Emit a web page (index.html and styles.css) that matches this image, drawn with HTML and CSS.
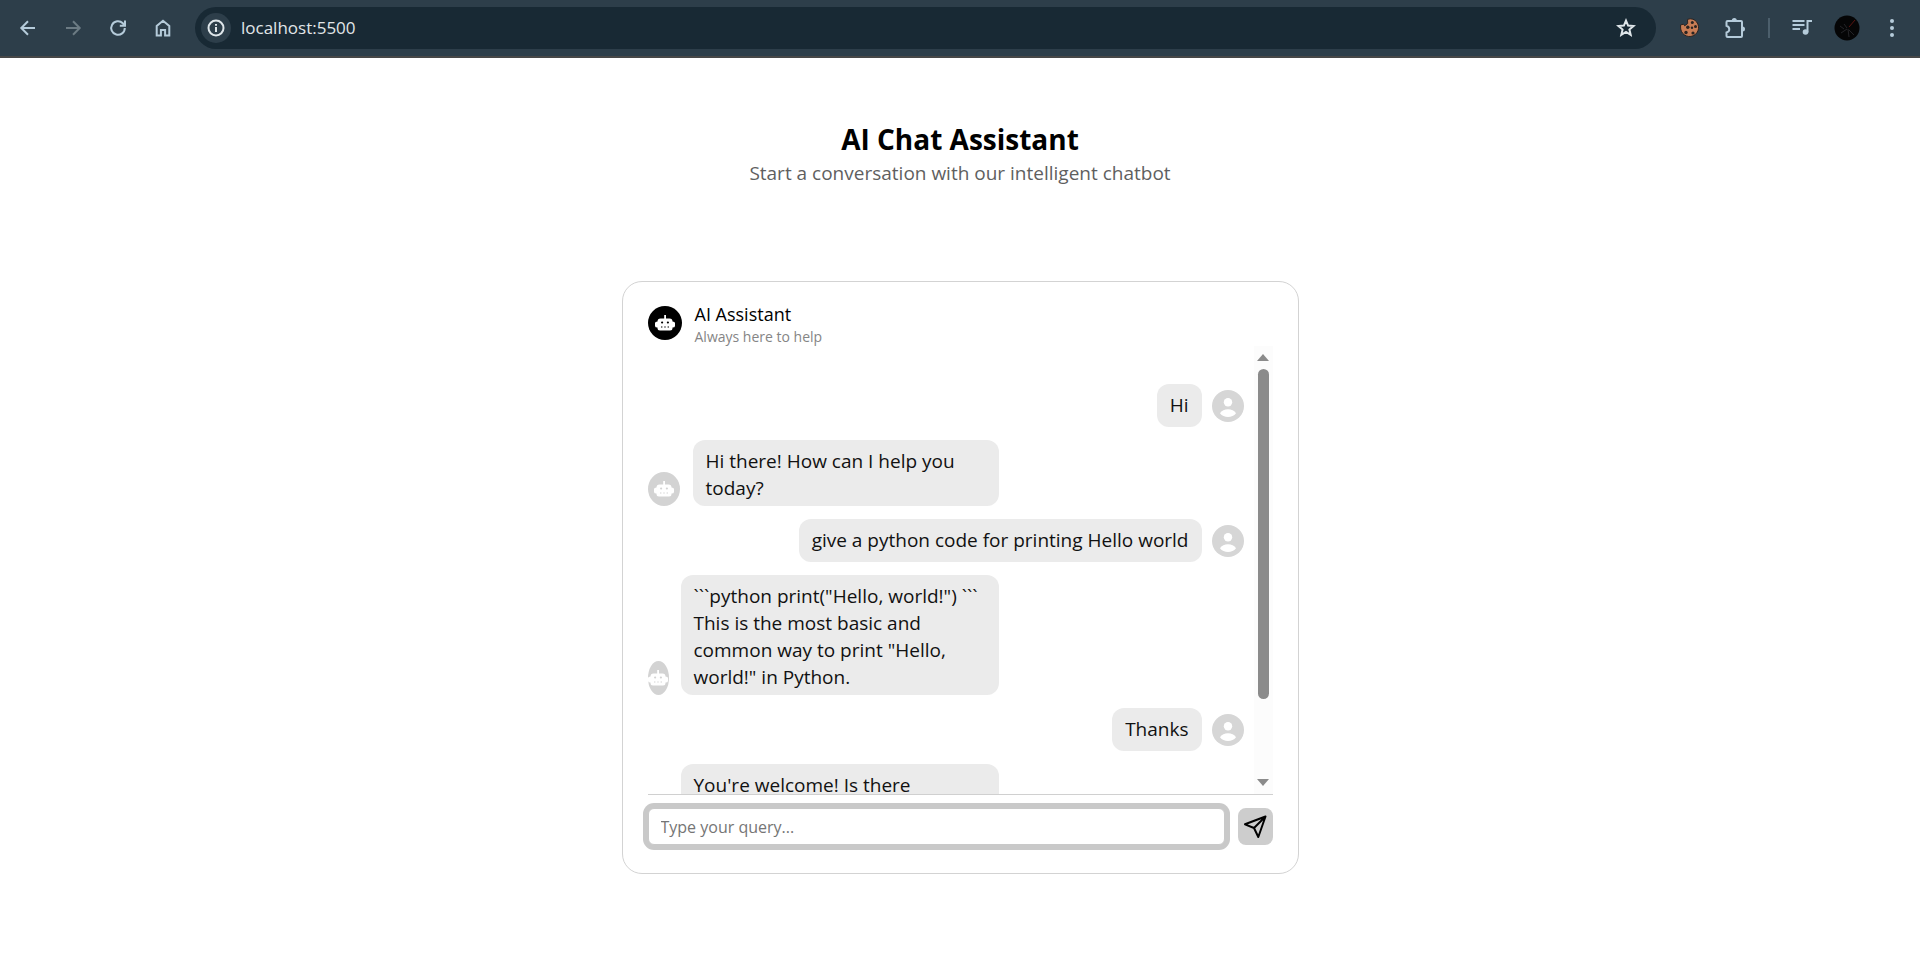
FILE: index.html
```html
<!DOCTYPE html>
<html lang="en">
<head>
<meta charset="utf-8">
<meta name="viewport" content="width=device-width, initial-scale=1">
<title>AI Chat Assistant</title>
<link rel="stylesheet" href="styles.css">
</head>
<body>
<svg class="sprite" aria-hidden="true">
  <symbol id="robot" viewBox="0 0 20 16">
    <path fill="currentColor" d="M9.200 0h1.800v3.500h3.500a3 3 0 0 1 3 3v6.500a2.500 2.500 0 0 1-2.500 2.500H5a2.500 2.500 0 0 1-2.500-2.500V6.500a3 3 0 0 1 3-3h3.700zM0 8Q0 6.500 2.500 6.500v6Q0 12.500 0 11zM20 8Q20 6.500 17.500 6.500v6Q20 12.500 20 11z"/>
    <path class="robot-face" d="M6 7.500a1.100 1.100 0 1 0 2.200 0a1.100 1.100 0 1 0-2.200 0M11.800 7.500a1.100 1.100 0 1 0 2.200 0a1.100 1.100 0 1 0-2.200 0M6 11.500h1.400v.9H6zM9.300 11.500h1.400v.9H9.300zM12.600 11.500H14v.9h-1.400z"/>
  </symbol>
  <symbol id="person" viewBox="0 0 32 32">
    <circle cx="16" cy="16" r="16" fill="#d6d6d6"/>
    <circle cx="16" cy="12.200" r="4.200" fill="#fff"/>
    <path fill="#fff" d="M8 23.200c3-5.200 13-5.200 16 0c-3.500 5-12.500 5-16 0z"/>
  </symbol>
</svg>

<header class="toolbar">
  <nav class="nav-buttons" aria-label="Browser">
    <button class="tool" aria-label="Back"><svg viewBox="0 0 20 20"><path d="M17 10H4M10 3.300L3.300 10l6.700 6.700"/></svg></button>
    <button class="tool tool-off" aria-label="Forward"><svg viewBox="0 0 20 20"><path d="M3 10h13M10 3.300l6.700 6.700-6.700 6.700"/></svg></button>
    <button class="tool" aria-label="Reload"><svg viewBox="0 0 20 20"><path d="M16.800 10a6.800 6.800 0 1 1-2-4.800L17 7.500M17 2.500v5.200h-5.200"/></svg></button>
    <button class="tool" aria-label="Home"><svg viewBox="0 0 20 20"><path d="M3.700 17.500V8L10 2.700 16.300 8v9.500h-4.200v-5.600H7.900v5.600z"/></svg></button>
  </nav>
  <div class="omnibox">
    <button class="site-info" aria-label="Site information"><svg viewBox="0 0 20 20"><circle cx="10" cy="10" r="7.500"/><path d="M10 9v5M10 6v1.700"/></svg></button>
    <input class="address" aria-label="Address" value="localhost:5500">
    <button class="tool star" aria-label="Bookmark"><svg viewBox="0 0 20 20"><path d="M10 2.600l2.100 5 5.400.4-4.100 3.500 1.300 5.300L10 14l-4.700 2.800 1.300-5.300L2.500 8l5.400-.4z"/></svg></button>
  </div>
  <div class="actions">
    <button class="tool cookie" aria-label="Cookie editor"><svg viewBox="0 0 20 20"><path d="M7.500 1.400Q10 .2 13 1.200a9 9 0 1 1-12.300 9.800L.5 7l3-.8 1.200 1.600 3-2.300z" fill="#c97d55" stroke="#2b2422" stroke-width="1"/><g fill="#2b2422" stroke="none"><circle cx="12.300" cy="4.500" r="1.500"/><circle cx="7.800" cy="9.300" r="1.700"/><circle cx="15.500" cy="8.500" r="1.500"/><circle cx="6" cy="14.500" r="1.700"/><circle cx="13" cy="15" r="1.600"/><circle cx="12" cy="9.800" r="1.200"/></g></svg></button>
    <button class="tool" aria-label="Extensions"><svg class="puzzle" viewBox="0 0 22 22"><path d="M3.500 4h13.500q1 0 1 1v14q0 1-1 1H3.500q-1 0-1-1v-3.500q2.800-.8 2.800-3.300T2.500 8.700V5q0-1 1-1z"/><path d="M7.800 3.500a2.500 2.500 0 0 1 5 0zM18.500 9.500a2.500 2.500 0 0 1 0 5z" fill="currentColor" stroke="none"/></svg></button>
    <span class="divider"></span>
    <button class="tool" aria-label="Media controls"><svg viewBox="0 0 20 20"><path d="M.5 3h12M.5 7h12M.5 11h7.500M15.500 14.500V3H20"/><circle cx="13.500" cy="14" r="2.800" fill="currentColor" stroke="none"/></svg></button>
    <button class="tool" aria-label="Profile"><svg class="profile" viewBox="0 0 26 26"><circle cx="13" cy="13" r="12.500" fill="#050506" stroke="none"/><path d="M15 12l6-7" stroke="#5a1512" stroke-width="1"/><path d="M13 14l-6 4M14 14l1 8M15 15l5 5M10 9l3 4M6 11l4 3" stroke="#242428" stroke-width="1"/></svg></button>
    <button class="tool" aria-label="Menu"><svg viewBox="0 0 20 20"><g fill="currentColor" stroke="none"><circle cx="10" cy="3" r="2"/><circle cx="10" cy="10" r="2"/><circle cx="10" cy="17" r="2"/></g></svg></button>
  </div>
</header>

<main class="page">
  <h1 class="title">AI Chat Assistant</h1>
  <p class="subtitle">Start a conversation with our intelligent chatbot</p>

  <section class="card">
    <div class="card-head">
      <span class="avatar avatar-dark"><svg class="robot"><use href="#robot"/></svg></span>
      <div>
        <h2 class="name">AI Assistant</h2>
        <p class="status">Always here to help</p>
      </div>
    </div>

    <div class="chat">
      <div class="messages">
        <div class="row row-user"><p class="bubble">Hi</p><svg class="person"><use href="#person"/></svg></div>
        <div class="row row-bot row-first"><span class="avatar"><svg class="robot"><use href="#robot"/></svg></span><p class="bubble">Hi there! How can I help you today?</p></div>
        <div class="row row-user"><p class="bubble">give a python code for printing Hello world</p><svg class="person"><use href="#person"/></svg></div>
        <div class="row row-bot"><span class="avatar avatar-slim"><svg class="robot"><use href="#robot"/></svg></span><p class="bubble">```python print("Hello, world!") ``` This is the most basic and common way to print "Hello, world!" in Python.</p></div>
        <div class="row row-user"><p class="bubble">Thanks</p><svg class="person"><use href="#person"/></svg></div>
        <div class="row row-bot row-last"><span class="avatar avatar-slim"><svg class="robot"><use href="#robot"/></svg></span><p class="bubble">You're welcome! Is there</p></div>
      </div>
      <div class="scrollbar" aria-hidden="true">
        <span class="arrow arrow-up"></span>
        <span class="track"><span class="thumb"></span></span>
        <span class="arrow arrow-down"></span>
      </div>
    </div>

    <form class="composer">
      <input class="query" type="text" placeholder="Type your query..." aria-label="Your query">
      <button class="send" type="button" aria-label="Send"><svg viewBox="0 0 24 24"><path d="M22.500 1.500L2 9.300l9 3.700 4.300 9zM22.500 1.500L11 13"/></svg></button>
    </form>
  </section>
</main>
</body>
</html>
```

FILE: styles.css
```css
* { box-sizing: border-box; }

body {
  margin: 0;
  background: #fff;
  color: #111;
  font-family: "Segoe UI", "Open Sans", "Noto Sans", sans-serif;
}

h1, h2, p { margin: 0; font-weight: 400; }
button { padding: 0; border: 0; background: none; color: inherit; font: inherit; }
svg { display: block; }
.sprite { display: none; }

/* Browser toolbar */
.toolbar {
  display: flex;
  align-items: center;
  height: 58px;
  padding: 0 18px;
  border-bottom: 2px solid #474747;
  background: #2d3e4a;
  color: #b5cbda;
}
.nav-buttons { display: flex; gap: 25px; }
.tool svg {
  width: 20px;
  height: 20px;
  fill: none;
  stroke: currentColor;
  stroke-width: 2;
}
.tool-off { color: #6c7b84; }
.omnibox {
  display: flex;
  flex: 1;
  align-items: center;
  height: 42px;
  margin-left: 22px;
  padding: 0 20px 0 6px;
  border-radius: 21px;
  background: #182934;
}
.site-info {
  display: grid;
  place-items: center;
  width: 30px;
  height: 30px;
  border-radius: 50%;
  background: #2d3e4a;
  color: #dfe6ea;
}
.site-info svg { width: 20px; height: 20px; fill: none; stroke: currentColor; stroke-width: 2; }
.address {
  flex: 1;
  min-width: 0;
  margin-left: 8px;
  border: 0;
  background: none;
  color: #e1e6e9;
  font: 17px/24px "Segoe UI", "Open Sans", "Noto Sans", sans-serif;
}
.star { color: #dfe6ea; }
.actions { display: flex; align-items: center; gap: 22px; margin-left: 24px; }
.cookie { margin-right: 2px; }
.divider { width: 2px; height: 20px; background: #4c5f6c; }
.tool .puzzle { width: 22px; height: 22px; }
.tool .profile { width: 26px; height: 26px; }

/* Page */
.page {
  display: flex;
  flex-direction: column;
  align-items: center;
  padding: 63px 16px;
}
.title { color: #000; font-size: 28px; line-height: 36px; font-weight: 700; }
.subtitle { color: #5f5f5f; font-size: 19px; line-height: 32px; }

.card {
  width: 100%;
  max-width: 677px;
  margin-top: 92px;
  padding: 22px 25px 28px;
  border: 1px solid #d3d3d3;
  border-radius: 20px;
}
.card-head { display: flex; align-items: flex-start; gap: 13px; }
.name { color: #000; font-size: 18px; line-height: 20px; }
.status { margin-top: 3px; color: #858585; font-size: 14px; line-height: 19px; }

.avatar {
  display: grid;
  flex: none;
  place-items: center;
  width: 32px;
  height: 34px;
  border-radius: 50%;
  background: #d3d3d3;
  color: #fff;
}
.avatar-dark { width: 34px; margin-top: 2px; background: #000; }
.avatar-slim { width: 21px; }
.robot { width: 20px; height: 16px; }
.robot-face { fill: var(--face, #d3d3d3); }
.avatar-dark .robot { --face: #000; }

/* Conversation */
.chat {
  display: flex;
  height: 449px;
  border-bottom: 1px solid #d0d0d0;
}
.messages {
  display: flex;
  flex: 1;
  flex-direction: column;
  gap: 13px;
  min-width: 0;
  padding: 38px 10px 0 0;
  overflow: hidden;
}
.row { display: flex; flex: none; gap: 12px; }
.row-user { align-items: center; justify-content: flex-end; gap: 10px; }
.row-bot { align-items: flex-end; width: 59%; }
.row-first { gap: 13px; }
.row-last { min-height: 66px; align-items: stretch; }
.bubble {
  padding: 8px 13px;
  border-radius: 12px;
  background: #ebebeb;
  font-size: 19px;
  line-height: 27px;
}
.row-bot .bubble { flex: 1; padding-bottom: 4px; }
.row-last .avatar { align-self: flex-end; }
.person { flex: none; width: 32px; height: 32px; }

.scrollbar {
  display: flex;
  flex-direction: column;
  align-items: center;
  width: 19px;
  padding: 8px 0;
  background: #fcfcfc;
}
.arrow { border: 6px solid transparent; }
.arrow-up { border-top: 0; border-bottom: 7px solid #8b8b8b; }
.arrow-down { border-bottom: 0; border-top: 7px solid #8b8b8b; }
.track { flex: 1; width: 11px; padding: 8px 0; }
.thumb { display: block; height: 82%; border-radius: 6px; background: #8b8b8b; }

.composer {
  display: flex;
  align-items: center;
  gap: 13px;
  padding-top: 13px;
}
.query {
  flex: 1;
  min-width: 0;
  height: 37px;
  padding: 0 12px;
  border: 1px solid #c9c9c9;
  border-radius: 6px;
  outline: 0;
  box-shadow: 0 0 0 5px #c9c9c9;
  font: 16px/24px "Segoe UI", "Open Sans", "Noto Sans", sans-serif;
}
.query::placeholder { color: #757575; }
.send {
  display: grid;
  place-items: center;
  width: 35px;
  height: 37px;
  border-radius: 8px;
  background: #cdcdcd;
  color: #000;
}
.send svg { width: 24px; height: 24px; fill: none; stroke: currentColor; stroke-width: 2; stroke-linejoin: round; }
```
